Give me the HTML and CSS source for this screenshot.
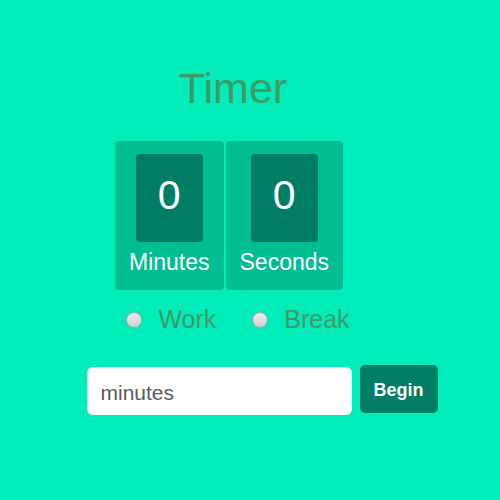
FILE: index.html
```html
<!DOCTYPE html>
<html>
<head>
<meta charset="utf-8">
<link rel="stylesheet" href="styles.css">
</head>
<body>
<main class="page">
  <h1 class="title">Timer</h1>
  <div class="timer">
    <div class="unit">
      <div class="digit">0</div>
      <div class="label">Minutes</div>
    </div>
    <div class="unit">
      <div class="digit">0</div>
      <div class="label">Seconds</div>
    </div>
  </div>
  <div class="modes">
    <label class="mode"><input type="radio" name="mode" class="radio"><span>Work</span></label>
    <label class="mode"><input type="radio" name="mode" class="radio"><span>Break</span></label>
  </div>
  <form class="form">
    <input type="text" class="field" placeholder="minutes">
    <button type="button" class="begin">Begin</button>
  </form>
</main>
</body>
</html>
```

FILE: styles.css
```css
html, body {
  margin: 0;
  padding: 0;
  background: #00ecb8;
  height: 100%;
}
.page {
  display: flex;
  flex-direction: column;
  align-items: center;
  padding-right: 34px;
  font-family: "Liberation Sans", Arial, sans-serif;
}
.title {
  margin: 63px 0 0 0;
  font-size: 43px;
  font-weight: normal;
  line-height: 50px;
  color: #3f9a68;
}
.timer {
  display: flex;
  margin-top: 28px;
  margin-right: 8px;
}
.unit {
  display: flex;
  flex-direction: column;
  align-items: center;
  background: #00be91;
  border-radius: 4px;
  padding: 13px 14px 15px;
}
.unit + .unit {
  margin-left: 2px;
}
.digit {
  width: 67px;
  height: 88px;
  background: #007e65;
  border-radius: 4px;
  color: #fff;
  font-size: 41px;
  display: flex;
  align-items: center;
  justify-content: center;
  padding-bottom: 5px;
  box-sizing: border-box;
}
.label {
  margin-top: 8px;
  color: #fff;
  font-size: 23px;
  line-height: 25px;
}
.modes {
  display: flex;
  gap: 36px;
  margin-top: 14px;
  margin-left: 10px;
}
.mode {
  display: flex;
  align-items: center;
  gap: 16px;
  font-size: 25px;
  line-height: 30px;
  color: #3f9a68;
}
.radio {
  appearance: none;
  -webkit-appearance: none;
  margin: 2px 0 0 0;
  width: 16px;
  height: 16px;
  border-radius: 50%;
  border: 1px solid #a4a6a4;
  background: linear-gradient(#ececec, #cfcfcf);
  box-sizing: border-box;
}
.form {
  display: flex;
  align-items: flex-start;
  gap: 8px;
  margin: 31px 0 0 58px;
}
.field {
  margin-top: 2px;
  width: 265px;
  height: 48px;
  box-sizing: border-box;
  border: none;
  border-radius: 6px;
  background: #fff;
  padding: 3px 14px 0;
  font-family: "Liberation Sans", Arial, sans-serif;
  font-size: 21px;
}
.field::placeholder {
  color: #5a5a5a;
}
.begin {
  height: 48px;
  width: 78px;
  border: none;
  border-radius: 5px;
  background: #007e65;
  color: #fff;
  font-family: "Liberation Sans", Arial, sans-serif;
  font-weight: bold;
  font-size: 18px;
  padding: 2px 0 0;
}
```
